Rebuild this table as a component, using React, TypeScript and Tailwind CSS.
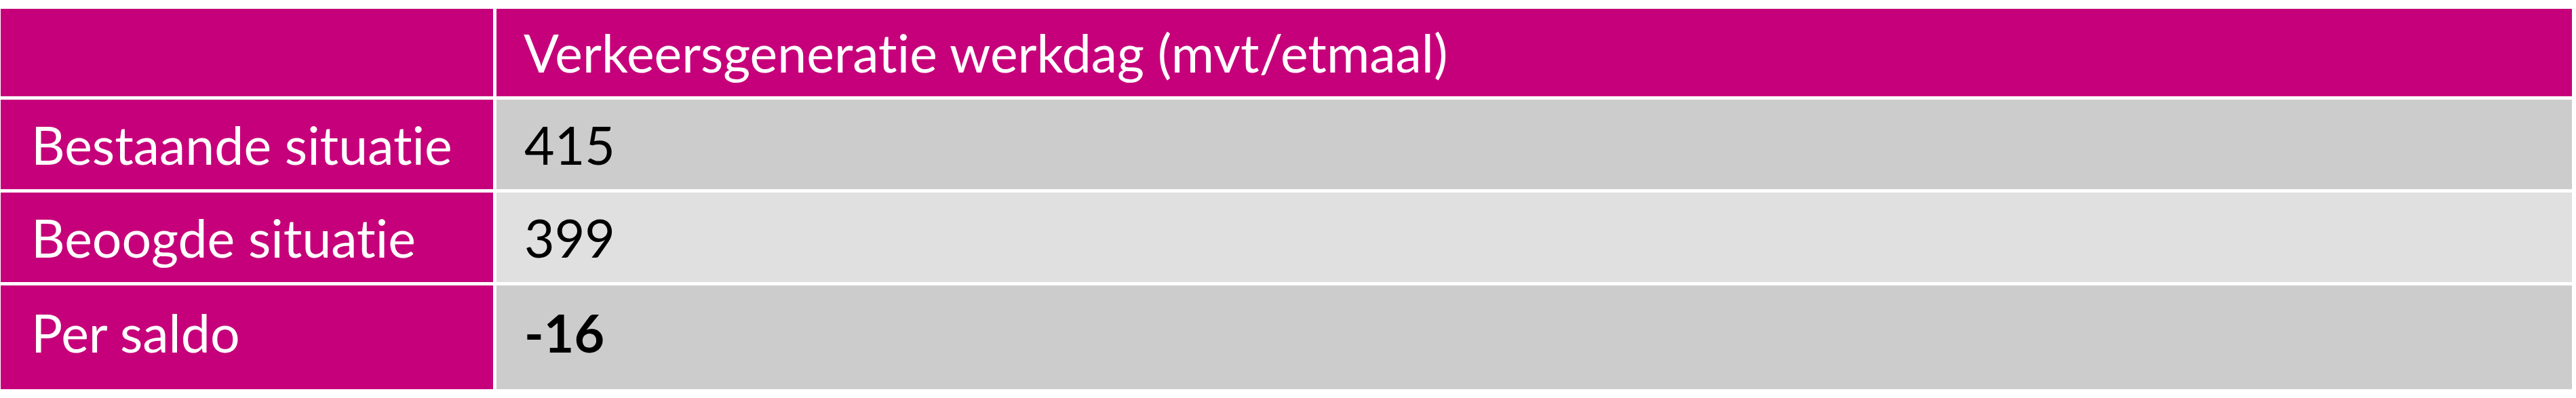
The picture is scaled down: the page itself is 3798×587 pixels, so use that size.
import React from "react";

const rows = [
  { label: "Bestaande situatie", value: "415", bg: "bg-[#cccccc]", h: "h-[132px]", bold: false },
  { label: "Beoogde situatie", value: "399", bg: "bg-[#e0e0e0]", h: "h-[132px]", bold: false },
  { label: "Per saldo", value: "-16", bg: "bg-[#cccccc]", h: "h-[153px]", bold: true },
];

export default function App() {
  return (
    <main className="w-[3798px] h-[587px] bg-white pt-[13px] pl-[1px] font-['Lato',sans-serif] text-[77px] leading-none [font-variant-ligatures:none]">
      <div className="w-[3791px] grid grid-cols-[726px_1fr] gap-[5px]">
        {/* Header */}
        <div className="h-[129px] bg-[#c6007a]" />
        <div className="h-[129px] bg-[#c6007a] flex items-center pl-[40px] text-white">
          Verkeersgeneratie werkdag (mvt/etmaal)
        </div>

        {rows.map((row) => (
          <React.Fragment key={row.label}>
            <div className={`${row.h} bg-[#c6007a] flex items-center pl-[45px] text-white ${row.bold ? "pb-[14px]" : ""}`}>
              {row.label}
            </div>
            <div className={`${row.h} ${row.bg} flex items-center pl-[41px] text-black ${row.bold ? "font-bold pb-[14px]" : ""}`}>
              {row.value}
            </div>
          </React.Fragment>
        ))}
      </div>
    </main>
  );
}
